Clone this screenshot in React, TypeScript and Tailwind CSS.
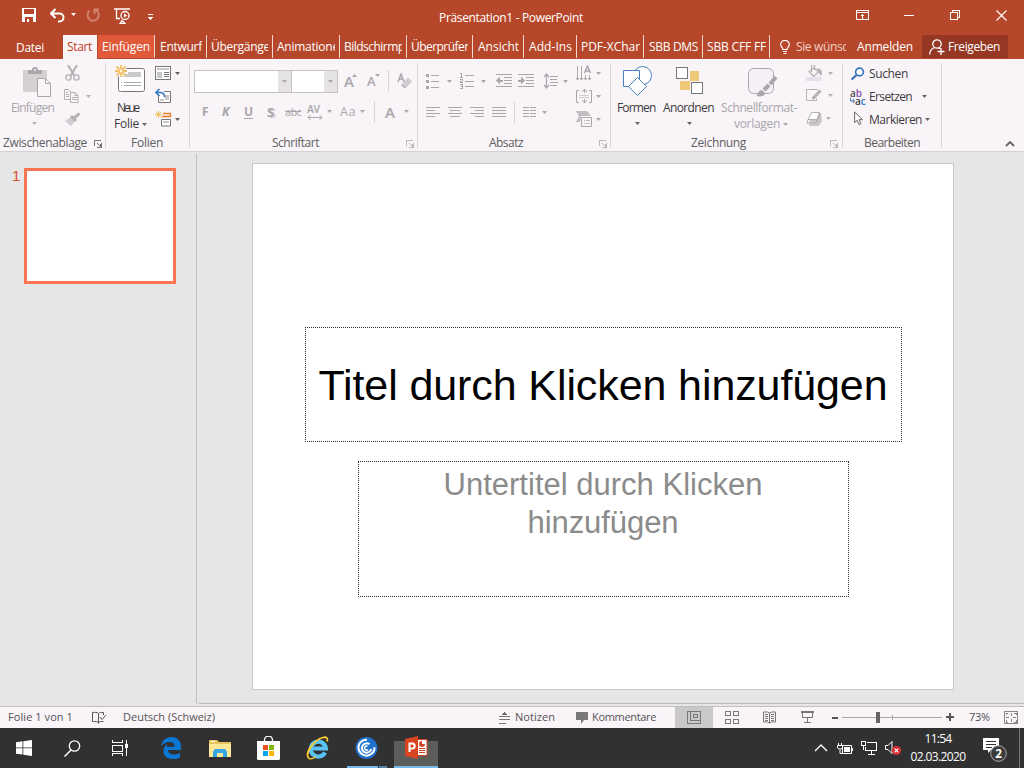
import { useLayoutEffect, useRef, useState } from "react";
import type { ReactNode } from "react";

/* Text whose letter spacing is tuned so the label takes exactly `w` pixels. */
function Txt({ w, c = "", children }: { w: number; c?: string; children: string }) {
  const ref = useRef<HTMLSpanElement>(null);
  const [ls, setLs] = useState(0);
  useLayoutEffect(() => {
    const el = ref.current;
    if (!el) return;
    el.style.letterSpacing = "0px";
    const natural = el.getBoundingClientRect().width;
    const v = (w - natural) / children.length;
    el.style.letterSpacing = v + "px";
    setLs(v);
  }, [w, children]);
  return (
    <span ref={ref} className={"inline-block shrink-0 whitespace-nowrap " + c} style={{ letterSpacing: ls }}>
      {children}
    </span>
  );
}

function Ico({ w, h, c = "", crisp = false, children }: { w: number; h: number; c?: string; crisp?: boolean; children: ReactNode }) {
  return (
    <svg
      width={w}
      height={h}
      viewBox={`0 0 ${w} ${h}`}
      className={"block shrink-0 " + c}
      fill="none"
      stroke="currentColor"
      shapeRendering={crisp ? "crispEdges" : "auto"}
    >
      {children}
    </svg>
  );
}

function Caret({ c = "" }: { c?: string }) {
  return (
    <svg width="5" height="3" viewBox="0 0 5 3" className={"block shrink-0 " + c}>
      <path d="M0 0h5L2.5 3z" fill="currentColor" />
    </svg>
  );
}

function Launcher({ c = "" }: { c?: string }) {
  return (
    <Ico w={8} h={8} c={c} crisp>
      <path d="M.5 6V.5H7M3 3l3 3M7.500 3v4.500H3M6.500 4v3" />
    </Ico>
  );
}

function Tab({ c, w, children }: { c: string; w: number; children: string }) {
  return (
    <div className={"flex h-[23px] shrink-0 items-center overflow-hidden border-r border-[#f0d6ce] " + c}>
      <div className="flex overflow-hidden">
        <Txt w={w}>{children}</Txt>
      </div>
    </div>
  );
}

function TitleBar() {
  return (
    <div className="flex h-[35px] items-center text-white">
      <Ico w={14} h={14} c="ml-[22px] mb-[5px]" crisp>
        <path d="M0 0h14v14H0z" fill="#fff" stroke="none" />
        <path d="M2 1h10v5H2zM3 9h8v5H3z" fill="#b7472a" stroke="none" />
        <path d="M5 11h2v3H5z" fill="#fff" stroke="none" />
      </Ico>
      <Ico w={15} h={15} c="ml-[14px] mb-[5px]">
        <path d="M1 5.500h8.500a4 4 0 0 1 0 8H8M5.500 1 1 5.500 5.500 10" strokeWidth="2" />
      </Ico>
      <Caret c="ml-[6px] mb-[6px]" />
      <Ico w={14} h={14} c="ml-[10px] mb-[5px] text-[#d0836e]">
        <path d="M9.500 2A5.600 5.600 0 1 1 3.500 2.800M8.500 6V1.500H13" strokeWidth="1.900" />
      </Ico>
      <Ico w={18} h={16} c="ml-[14px] mb-[4px]">
        <path d="M0 1h16M2.500 1v9.500H6M6 15.500l2-3 3 3z" strokeWidth="1.300" />
        <circle cx="11" cy="7.500" r="4" strokeWidth="1.300" fill="#b7472a" />
        <path d="m10 5.500 3.200 2-3.200 2z" fill="#fff" stroke="none" />
      </Ico>
      <Ico w={5} h={6} c="ml-[16px] mt-[-1px]" crisp>
        <path d="M0 .5h5" />
        <path d="M0 3h5L2.500 6z" fill="#fff" stroke="none" />
      </Ico>
      <Txt w={144} c="ml-[286px]">Präsentation1 - PowerPoint</Txt>
      <Ico w={13} h={10} c="ml-[273px] mb-[5px]" crisp>
        <path d="M.5 .5h12v9H.5zM.5 2.500h12M6.500 4v5M4.500 6.500l2-2 2 2" />
      </Ico>
      <Ico w={10} h={1} c="ml-[35px] mb-[5px]" crisp>
        <path d="M0 .5h10" />
      </Ico>
      <Ico w={10} h={10} c="ml-[36px] mb-[5px]" crisp>
        <path d="M.5 2.500h7v7h-7zM2.500 2.500v-2h7v7h-2" />
      </Ico>
      <Ico w={11} h={11} c="ml-[36px] mb-[5px]">
        <path d="m.5.5 10 10m0-10-10 10" strokeWidth="1.100" />
      </Ico>
    </div>
  );
}

function Tabs() {
  return (
    <div className="flex h-[24px] text-white">
      <div className="flex h-[24px] w-[63px] shrink-0 items-center pl-[16px] pt-[2px]"><Txt w={28}>Datei</Txt></div>
      <div className="flex h-[24px] w-[34px] shrink-0 items-center bg-[#f8f4f8] pl-[4px] text-[#c43e1c]"><Txt w={25}>Start</Txt></div>
      <div className="h-[24px] w-px shrink-0 bg-[#b7472a]" />
      <Tab c="w-[57px] bg-[#e05a3a] pl-[4px]" w={48}>Einfügen</Tab>
      <Tab c="w-[52px] pl-[5px]" w={42}>Entwurf</Tab>
      <Tab c="w-[66px] pl-[4px] pr-[4px]" w={59}>Übergänge</Tab>
      <Tab c="w-[67px] pl-[4px] pr-[4px]" w={69}>Animationen</Tab>
      <Tab c="w-[67px] pl-[4px] pr-[4px]" w={119}>Bildschirmpräsentation</Tab>
      <Tab c="w-[66px] pl-[4px] pr-[4px]" w={60}>Überprüfen</Tab>
      <Tab c="w-[51px] pl-[5px]" w={41}>Ansicht</Tab>
      <Tab c="w-[53px] pl-[5px]" w={43}>Add-Ins</Tab>
      <Tab c="w-[67px] pl-[4px] pr-[3px]" w={59}>PDF-XChar</Tab>
      <Tab c="w-[59px] pl-[5px]" w={49}>SBB DMS</Tab>
      <Tab c="w-[67px] pl-[4px]" w={59}>SBB CFF FF</Tab>
      <div className="flex h-[24px] items-center">
        <Ico w={10} h={14} c="ml-[10px]">
          <path d="M3 9.500C3 7.500.7 7 .7 4.600a4.300 4.300 0 0 1 8.600 0C9.300 7 7 7.500 7 9.500zM3 11.500h4M3.500 13.500h3" strokeWidth="1.200" />
        </Ico>
        <div className="ml-[6px] w-[50px] overflow-hidden text-[#efcfc6]"><Txt w={65}>Sie wünsche</Txt></div>
        <Txt w={56} c="ml-[11px]">Anmelden</Txt>
        <div className="ml-[9px] flex h-[23px] w-[86px] items-center self-start bg-[#953722]">
          <Ico w={16} h={16} c="ml-[7px]">
            <circle cx="8" cy="5" r="4.200" strokeWidth="1.300" />
            <path d="M.7 15.500c0-4 2.300-6 5-7M12 9v7M8.500 12.500h7M9.500 8.800l1.500 1" strokeWidth="1.300" />
          </Ico>
          <Txt w={52} c="ml-[3px]">Freigeben</Txt>
        </div>
      </div>
    </div>
  );
}

function Group({ c, label, w, l, launcher, children }: { c: string; label: string; w: number; l: string; launcher?: string; children: ReactNode }) {
  return (
    <div className={"flex h-[85px] shrink-0 flex-col border-r border-[#dad6da] " + c}>
      <div className="flex h-[72px] shrink-0">{children}</div>
      <div className={"mt-[2px] flex h-[11px] shrink-0 items-center text-[#605e60] " + l}>
        <Txt w={w}>{label}</Txt>
        {launcher && <Launcher c={"mt-[2px] " + launcher} />}
      </div>
    </div>
  );
}

const G = "text-[#b4b0b4]";
const D = "text-[#605e60]";

function Clipboard() {
  return (
    <Group c="w-[106px]" label="Zwischenablage" w={84} l="pl-[3px]" launcher="ml-[7px] text-[#777]">
      <div className="flex w-[64px] shrink-0 flex-col">
        <Ico w={29} h={31} c="ml-[23px] mt-[4px]">
          <path d="M0 3h24v22H0z" fill="#d4d0d4" stroke="none" />
          <path d="M5 7V3h4a3 3 0 0 1 6 0h4v4z" fill="#aaa6aa" stroke="none" />
          <path d="M14.500 11.500h8l5 5v13h-13z" fill="#f8f4f8" stroke="#aaa6aa" />
          <path d="M22.500 11.500v5h5" stroke="#aaa6aa" />
          <circle cx="12" cy="3" r="1" fill="#f8f4f8" stroke="none" />
        </Ico>
        <Txt w={47} c="ml-[11px] mt-[2px] h-[17px] text-[#a8a4a8]">Einfügen</Txt>
        <Caret c="ml-[32px] mt-[5px] text-[#b4b0b4]" />
      </div>
      <div className={"flex flex-col " + G}>
        <Ico w={15} h={16} c="ml-px mt-[2px]">
          <path d="m3 0 6.500 11M12 0 5.500 11" strokeWidth="2" />
          <circle cx="3.500" cy="12.500" r="2.600" strokeWidth="1.300" />
          <circle cx="11.500" cy="12.500" r="2.600" strokeWidth="1.300" />
        </Ico>
        <div className="mt-[8px] flex items-center">
          <Ico w={15} h={14}>
            <path d="M6 10.500H.5V.5h4l3 3M2 3.500h2M2 5.500h3M2 7.500h3M6.500 3.500h4.500l3 3v7H6.500zM11 3.500v3h3M8 8.500h5M8 10.500h5" />
          </Ico>
          <Caret c="ml-[7px]" />
        </div>
        <Ico w={16} h={14} c="ml-px mt-[9px]">
          <path d="m0 9 6-4 4 4-4 5z" fill="#d0ccd0" stroke="none" />
          <path d="m6 4 5 5M9 6l5.500-4.500" strokeWidth="3" />
        </Ico>
      </div>
    </Group>
  );
}

function Slides() {
  return (
    <Group c="w-[84px]" label="Folien" w={32} l="pl-[25px]">
      <div className="flex w-[49px] shrink-0 flex-col">
        <Ico w={31} h={28} c="ml-[9px] mt-[2px]">
          <path d="M3.500 5.500A2 2 0 0 1 5.500 3.500h22a2 2 0 0 1 2 2v19a2 2 0 0 1-2 2h-22a2 2 0 0 1-2-2z" fill="#fff" stroke="#777577" />
          <path d="M13 7h13v5H7v-3h6z" fill="#cbc8cb" stroke="none" />
          <path d="M6 17.500h1M9 17.500h17M6 20.500h1M9 20.500h17" stroke="#aaa" />
          <circle cx="6" cy="6" r="6" fill="#f8f4f8" stroke="none" />
          <path d="M6 0v12M0 6h12M1.500 1.500l9 9M10.500 1.500l-9 9" stroke="#f0c169" strokeWidth="1.800" />
          <circle cx="6" cy="6" r="2" fill="#fff3d8" stroke="#f0c169" />
        </Ico>
        <Txt w={29} c="ml-[11px] mt-[7px] h-[15px] text-[#3e3c3e]">Neue</Txt>
        <div className="flex h-[18px] items-center text-[#3e3c3e]">
          <Txt w={25} c="ml-[8px]">Folie</Txt>
          <Caret c="ml-[3px] text-[#666]" />
        </div>
      </div>
      <div className={"flex flex-col " + D}>
        <div className="mt-[3px] flex items-center">
          <Ico w={16} h={14} crisp>
            <path d="M.5.5h15v13H.5z" fill="#fff" stroke="#777" />
            <path d="M2 2h12v2H2zM2 6h5v6H2z" fill="#cac7ca" stroke="none" />
            <path d="M9 6.500h5M9 8.500h5M9 10.500h5" stroke="#777" />
          </Ico>
          <Caret c="ml-[4px]" />
        </div>
        <Ico w={17} h={16} c="mt-[8px]">
          <path d="M3.500 7v7.500h12v-11H9" fill="#fff" stroke="#777" />
          <path d="M5 11h4v2H5zM10 7h4v5h-4z" fill="#cac7ca" stroke="none" />
          <path d="M1 4.500h4c3 0 4.500 1.500 4.500 4.500M4.500 1 1 4.500 4.500 8" stroke="#3c7abf" strokeWidth="1.700" />
        </Ico>
        <div className="mt-[7px] flex items-center">
          <Ico w={17} h={16}>
            <path d="M8 2.500h7.500v3H7" stroke="#ed7d22" strokeWidth="1.400" />
            <path d="M6.500 8.500h9v6.500h-9z" fill="#fff" stroke="#777" />
            <path d="M8 10h6v2H8z" fill="#cac7ca" stroke="none" />
            <path d="M3.500 0v7M0 3.500h7M1 1l5 5M6 1 1 6" stroke="#f0c169" />
          </Ico>
          <Caret c="ml-[3px]" />
        </div>
      </div>
    </Group>
  );
}

function FontGroup() {
  return (
    <Group c="w-[228px]" label="Schriftart" w={47} l="pl-[82px]" launcher="ml-[87px] text-[#bbb7bb]">
      <div className={"flex flex-col text-[#aaa6aa]"}>
        <div className="mt-[6px] flex h-[24px] items-center">
          <div className="ml-[4px] flex h-[23px] w-[98px] justify-end border border-[#c6c3c6] bg-white">
            <div className="flex h-full w-[13px] items-center justify-center bg-[#e6e3e6]"><Caret /></div>
          </div>
          <div className="flex h-[23px] w-[46px] justify-end border border-l-0 border-[#c6c3c6] bg-white">
            <div className="flex h-full w-[13px] items-center justify-center bg-[#e6e3e6]"><Caret /></div>
          </div>
          <span className="ml-[6px] text-[15px] font-semibold leading-none">A</span>
          <Ico w={5} h={3} c="mb-[12px] ml-[-2px]"><path d="M0 3h5L2.500 0z" fill="currentColor" stroke="none" /></Ico>
          <span className="ml-[10px] mt-px text-[13px] font-semibold leading-none">A</span>
          <Caret c="mb-[12px] ml-[-1px]" />
          <div className="ml-[8px] h-[22px] w-px bg-[#d6d2d6]" />
          <Ico w={16} h={16} c="ml-[8px]">
            <path d="m1 9 3-8 3 8M2 6h4" strokeWidth="1.500" />
            <path d="m5 11 6-6.500 4 4L9 15z" fill="#d0ccd0" stroke="none" />
            <path d="m4.500 11.500 4 3.500" strokeWidth="1.200" />
          </Ico>
        </div>
        <div className="mt-[7px] flex h-[23px] items-center">
          <Txt w={7} c="ml-[12px] font-bold">F</Txt>
          <Txt w={9} c="ml-[13px] font-bold italic">K</Txt>
          <Txt w={9} c="ml-[13px] font-bold underline underline-offset-2">U</Txt>
          <Txt w={9} c="ml-[14px] text-[13px] font-bold [text-shadow:2px_1px_1px_#d0ccd0]">S</Txt>
          <Txt w={16} c="ml-[9px] text-[11px] line-through">abc</Txt>
          <div className="ml-[6px] flex w-[16px] flex-col">
            <Txt w={15} c="h-[11px] text-[10.5px] font-semibold leading-[11px]">AV</Txt>
            <Ico w={16} h={5}><path d="M1 2.500h14M3.500 0 1 2.500 3.500 5M12.500 0 15 2.500 12.500 5" /></Ico>
          </div>
          <Caret c="ml-[4px]" />
          <Txt w={16} c="ml-[8px] text-[12.5px]">Aa</Txt>
          <Caret c="ml-[4px]" />
          <div className="ml-[9px] h-[22px] w-px bg-[#d6d2d6]" />
          <Txt w={10} c="ml-[10px] text-[15px] font-semibold">A</Txt>
          <Caret c="ml-[9px]" />
        </div>
      </div>
    </Group>
  );
}

function Lines({ c = "", d }: { c?: string; d: string }) {
  return <Ico w={14} h={11} c={c} crisp><path d={d} /></Ico>;
}

function Paragraph() {
  return (
    <Group c="w-[193px]" label="Absatz" w={34} l="pl-[71px]" launcher="ml-[76px] text-[#bbb7bb]">
      <div className="flex w-[158px] shrink-0 flex-col text-[#aaa6aa]">
        <div className="mt-[6px] flex h-[24px] items-center">
          <Ico w={14} h={15} c="ml-[8px]" crisp>
            <path d="M0 0h3v3H0zM0 6h3v3H0zM0 12h3v3H0z" fill="currentColor" stroke="none" />
            <path d="M5 1.500h8M5 7.500h8M5 13.500h8" />
          </Ico>
          <Caret c="ml-[7px]" />
          <Ico w={15} h={16} c="ml-[8px]" crisp>
            <path d="M5 2.500h9M5 8.500h9M5 13.500h9M0 .5h1.500V4M0 4.500h3M0 6.500h2.500v1L0 9.500h3M0 11.500h2.500v4H0M1 13.500h1" />
          </Ico>
          <Caret c="ml-[6px]" />
          <Ico w={16} h={14} c="ml-[10px]" crisp>
            <path d="M0 .5h16M8 3.500h8M8 6.500h8M8 9.500h8M0 12.500h16" />
            <path d="M0 6.500 4 3v2.500h3v2H4V10z" fill="currentColor" stroke="none" />
          </Ico>
          <Ico w={16} h={14} c="ml-[6px]" crisp>
            <path d="M0 .5h16M8 3.500h8M8 6.500h8M8 9.500h8M0 12.500h16" />
            <path d="M7 6.500 3 3v2.500H0v2h3V10z" fill="currentColor" stroke="none" />
          </Ico>
          <Ico w={14} h={16} c="ml-[10px]">
            <path d="M2.500 1v14M0 4l2.500-3L5 4M0 12l2.500 3L5 12" strokeWidth="1.300" />
            <path d="M6 3.500h8M6 6.500h7M6 9.500h8M6 12.500h7" />
          </Ico>
          <Caret c="ml-[5px]" />
        </div>
        <div className="mt-[8px] flex h-[23px] items-center">
          <Lines c="ml-[8px]" d="M0 .5h14M0 3.500h9M0 6.500h14M0 9.500h9" />
          <Lines c="ml-[8px]" d="M0 .5h14M2 3.500h10M0 6.500h14M2 9.500h10" />
          <Lines c="ml-[8px]" d="M0 .5h14M5 3.500h9M0 6.500h14M5 9.500h9" />
          <Lines c="ml-[8px]" d="M0 .5h14M0 3.500h14M0 6.500h14M0 9.500h14" />
          <div className="ml-[8px] h-[22px] w-px bg-[#d6d2d6]" />
          <Lines c="ml-[8px]" d="M0 .5h6M0 3.500h6M0 6.500h6M0 9.500h6M7 .5h6M7 3.500h6M7 6.500h6M7 9.500h6" />
          <Caret c="ml-[5px]" />
        </div>
      </div>
      <div className="flex flex-col text-[#aaa6aa]">
        <div className="mt-[2px] flex items-center">
          <Ico w={16} h={17}>
            <path d="M1.500 1v14M5.500 1v14M0 13l1.500 2L3 13M4 13l1.500 2L7 13M9.500 10v5M13.500 10v5M8 13l1.500 2 1.500-2M12 13l1.500 2 1.500-2" />
            <path d="m8.500 8 3-7 3 7M9.500 6h4" strokeWidth="1.500" />
          </Ico>
          <Caret c="ml-[4px]" />
        </div>
        <div className="mt-[6px] flex items-center">
          <Ico w={16} h={16}>
            <path d="M3 2.500H.5v12H3M13 2.500h2.500v12H13M8.500 1v4M8.500 11v4M6 4l2.500-3L11 4M6 12l2.500 3L11 12" />
            <path d="M3 7.500h10M3 9.500h10" stroke="#d0ccd0" />
          </Ico>
          <Caret c="ml-[4px]" />
        </div>
        <div className="mt-[7px] flex items-center">
          <Ico w={16} h={16}>
            <path d="M0 0h11l4 5H5l-1 6H0l3-6z" fill="#c0bcc0" stroke="none" />
            <path d="M5.500 6.500h10v9h-10z" fill="#f8f4f8" />
            <path d="M8 9.500h1M10 9.500h4M8 12.500h1M10 12.500h4" stroke="#c0bcc0" />
          </Ico>
          <Caret c="ml-[4px]" />
        </div>
      </div>
    </Group>
  );
}

function Drawing() {
  return (
    <Group c="w-[232px]" label="Zeichnung" w={55} l="pl-[80px]" launcher="ml-[84px] text-[#bbb7bb]">
      <div className="flex w-[52px] shrink-0 flex-col">
        <Ico w={31} h={31} c="ml-[11px] mt-[3px] text-[#4a80bd]">
          <circle cx="20.500" cy="9.500" r="9" fill="#fff" />
          <path d="M1.500 4.500h16v16h-16z" fill="#fff" />
          <path d="m15.500 11.500 9 9-9 9-9-9z" fill="#fff" />
        </Ico>
        <Txt w={41} c="ml-[6px] mt-[3px] h-[17px] text-[#3e3c3e]">Formen</Txt>
        <Caret c="ml-[24px] mt-[5px] text-[#666]" />
      </div>
      <div className="flex w-[58px] shrink-0 flex-col">
        <Ico w={28} h={28} c="ml-[13px] mt-[4px]" crisp>
          <path d="M14 4h9v10h-9zM4 14h10v9H4z" fill="#f0c978" stroke="none" />
          <path d="M.5.5h11v11H.5zM15.500 15.500h11v11h-11z" fill="#fff" stroke="#777" />
        </Ico>
        <Txt w={53} c="mt-[5px] h-[17px] text-[#3e3c3e]">Anordnen</Txt>
        <Caret c="ml-[24px] mt-[5px] text-[#666]" />
      </div>
      <div className="flex w-[85px] shrink-0 flex-col text-[#aaa6aa]">
        <Ico w={30} h={31} c="ml-[27px] mt-[4px]">
          <rect x=".5" y="1.500" width="25" height="25" rx="5" fill="#f5f0f5" />
          <path d="M8 29c3-2 2-6 6-6l3 3c0 3-3 4-9 3z" fill="#aaa6aa" stroke="none" />
          <path d="m16 23 5-5M22 17l6-7" strokeWidth="4" />
        </Ico>
        <Txt w={79} c="mt-[2px] h-[15px]">Schnellformat-</Txt>
        <div className="flex h-[18px] items-center">
          <Txt w={46} c="ml-[13px]">vorlagen</Txt>
          <Caret c="ml-[3px]" />
        </div>
      </div>
      <div className={"flex flex-col " + G}>
        <div className="mt-[2px] flex items-center">
          <Ico w={17} h={16}>
            <path d="M0 12h16v4H0z" fill="#e6e0ea" stroke="none" />
            <path d="m3 6.500 5-4 4.500 4.500-5 4.500zM5.500 7V0h3v5" fill="#f8f4f8" strokeWidth="1.200" />
            <path d="M11 3c5 1 6 4 4 8l-3-4z" fill="currentColor" stroke="none" />
          </Ico>
          <Caret c="ml-[5px]" />
        </div>
        <div className="mt-[7px] flex items-center">
          <Ico w={17} h={14}>
            <path d="M12 1.500H.5v11h10v-2" />
            <path d="m6.500 11 8-8.500" strokeWidth="3" />
          </Ico>
          <Caret c="ml-[5px]" />
        </div>
        <div className="mt-[9px] flex items-center">
          <Ico w={16} h={15}>
            <path d="M5 2h10l1 8-3 5H3z" fill="#cac6ca" stroke="none" />
            <path d="M5.500 1.500h8l-2.500 7H2z" fill="#fff" />
            <path d="M2 8.500 1 12h9l1-3.500 2.500-7v4L10 12" />
          </Ico>
          <Caret c="ml-[4px]" />
        </div>
      </div>
    </Group>
  );
}

function Editing() {
  return (
    <Group c="w-[99px]" label="Bearbeiten" w={56} l="pl-[21px]">
      <div className="flex flex-col text-[#3e3c3e]">
        <div className="flex h-[22px] items-center">
          <Ico w={14} h={13} c="ml-[8px] mt-[-1px] text-[#3e74b4]">
            <circle cx="8.500" cy="5" r="3.900" strokeWidth="1.700" fill="#fff" />
            <path d="m5.500 8-5 4.500" strokeWidth="2.300" />
          </Ico>
          <Txt w={39} c="ml-[4px]">Suchen</Txt>
        </div>
        <div className="flex h-[23px] items-center">
          <div className="ml-[7px] flex w-[16px] flex-col text-[10px] font-semibold leading-[8px]">
            <div className="flex text-[#4b494b]"><span>a</span><span className="text-[#8d4eb0]">b</span></div>
            <div className="flex items-center">
              <Ico w={5} h={5} c="text-[#3e74b4]"><path d="M.5 0v3H4M3 1l1.500 2L3 5" /></Ico>
              <span>a</span><span className="text-[#3e74b4]">c</span>
            </div>
          </div>
          <Txt w={43} c="ml-[3px]">Ersetzen</Txt>
          <Caret c="ml-[10px] text-[#666]" />
        </div>
        <div className="flex h-[23px] items-center">
          <Ico w={10} h={14} c="ml-[11px] mt-[-3px]">
            <path d="M.6 1v10.500l2.600-2.200L5 13.500l2-.8-2-4h3.500z" fill="#fff" stroke="#666" />
          </Ico>
          <Txt w={53} c="ml-[5px]">Markieren</Txt>
          <Caret c="ml-[3px] text-[#666]" />
        </div>
      </div>
    </Group>
  );
}

function Workspace() {
  return (
    <div className="flex h-[554px] bg-[#e6e6e6]">
      <div className="my-[2px] flex w-[197px] shrink-0 border-r border-[#c0c0c0]">
        <span className="ml-[12px] mt-[14px] w-[12px] font-['Liberation_Sans',sans-serif] text-[15px] leading-[16px] text-[#d95030]">1</span>
        <div className="mt-[14px] h-[116px] w-[152px] border-3 border-[#fa7554] bg-white" />
      </div>
      <div className="ml-[2px] flex h-[552px] grow flex-col border-b border-[#bcbcbc] pt-[11px]">
        <div className="ml-[53px] flex h-[527px] w-[702px] flex-col border border-[#c6c6c6] bg-white font-['Liberation_Sans',Arial,sans-serif]">
          <div className="ml-[52px] mt-[163px] flex h-[115px] w-[597px] justify-center border border-dotted border-[#333] pt-[32px] pr-px text-[43px] leading-[50px] text-black">
            <Txt w={569}>Titel durch Klicken hinzufügen</Txt>
          </div>
          <div className="ml-[105px] mt-[19px] flex h-[136px] w-[491px] flex-col items-center border border-dotted border-[#333] pt-[4px] pr-px text-[31px] leading-[38px] text-[#8b8b8b]">
            <Txt w={319}>Untertitel durch Klicken</Txt>
            <Txt w={151}>hinzufügen</Txt>
          </div>
        </div>
      </div>
    </div>
  );
}

function StatusBar() {
  return (
    <div className="flex h-[22px] items-center border-t border-[#c0bec0] bg-[#f8f4f8] text-[11px] text-[#555355]">
      <Txt w={65} c="ml-[8px] mt-[-2px]">Folie 1 von 1</Txt>
      <Ico w={15} h={13} c="ml-[19px]">
        <path d="M6.500 2.500C5 .8 3 1.500.5 1.500v9c3 0 4.500-.5 6 1.500 1-1.500 3-1.500 5-1.500M6.500 2.500V12M6.500 2.500C8 1 9 1.500 11.500 1.500V4M8 6l2 2.500L14 4" />
      </Ico>
      <Txt w={92} c="ml-[16px] mt-[-1px]">Deutsch (Schweiz)</Txt>
      <Ico w={12} h={12} c="ml-[284px]" crisp>
        <path d="M0 4.500h11M0 7.500h11M0 11.500h7" stroke="#777" />
        <path d="M3 3h5L5.500 0z" fill="#666" stroke="none" />
      </Ico>
      <Txt w={40} c="ml-[4px] mt-[-1px]">Notizen</Txt>
      <Ico w={12} h={12} c="ml-[21px]">
        <path d="M0 0h12v8H8l-3 4V8H0z" fill="#7a787a" stroke="none" />
      </Ico>
      <Txt w={64} c="ml-[4px] mt-[-1px]">Kommentare</Txt>
      <div className="ml-[19px] flex h-[21px] w-[38px] items-center justify-center bg-[#cbc8cb]">
        <Ico w={14} h={13} crisp>
          <path d="M.5.5h13v12H.5zM3.500.5v9M3.500 9.500h10M6.500 3.500h4v3h-4z" stroke="#777" />
        </Ico>
      </div>
      <Ico w={15} h={13} c="ml-[12px]" crisp>
        <path d="M.5.5h5v4h-5zM8.500.5h5v4h-5zM.5 8.500h5v4h-5zM8.500 8.500h5v4h-5z" stroke="#777" />
      </Ico>
      <Ico w={13} h={13} c="ml-[23px]">
        <path d="M.5 1h4l2 1 2-1h4v10h-4l-2 1-2-1h-4zM6.500 2v10M2 3.500h3M2 5.500h3M2 7.500h3M2 9.500h3M8 3.500h3M8 5.500h3M8 7.500h3M8 9.500h3" stroke="#777" />
      </Ico>
      <Ico w={14} h={13} c="ml-[25px]" crisp>
        <path d="M0 1.500h13M1.500 1.500v5h10v-5M6.500 6.500v5M3 11.500h7M0 .5h13" stroke="#777" />
      </Ico>
      <Ico w={122} h={13} c="ml-[17px]" crisp>
        <path d="M0 6.500h6" strokeWidth="2" />
        <path d="M10 6h100M60.500 3.500v5" stroke="#aaa8aa" />
        <path d="M44 1h4v11h-4z" fill="#666466" stroke="none" />
        <path d="M114 6h8M118 2v8" strokeWidth="2" />
      </Ico>
      <Txt w={21} c="ml-[15px] mt-[-1px]">73%</Txt>
      <Ico w={14} h={13} c="ml-[14px]" crisp>
        <path d="M.5.5h13v12H.5z" stroke="#888" />
        <path d="M7 2v3M7 8v3M2 6.500h3M9 6.500h3M2 4V2h2M10 2h2v2M2 9v2h2M12 9v2h-2" stroke="#888" />
      </Ico>
    </div>
  );
}

function Taskbar() {
  return (
    <div className="flex h-[40px] items-center bg-[#303130] text-white">
      <Ico w={16} h={16} c="ml-[16px]">
        <path d="m0 2.200 6.500-.9v6.200H0zM7.300 1.200 16 0v7.500H7.300zM0 8.300h6.500v6.300L0 13.700zM7.300 8.300H16V16l-8.700-1.300z" fill="#fff" stroke="none" />
      </Ico>
      <Ico w={17} h={17} c="ml-[32px]">
        <circle cx="10.500" cy="6" r="5.200" strokeWidth="1.300" />
        <path d="m7 10-6.500 6.500" strokeWidth="1.500" />
      </Ico>
      <Ico w={17} h={16} c="ml-[31px]" crisp>
        <path d="M.5 0v2.500h10V0M.5 5.500h10v6H.5zM.5 16v-2.500h10V16M14.500 0v16" />
        <path d="M13 4h3v4h-3z" fill="#fff" stroke="none" />
      </Ico>
      <Ico w={21} h={22} c="ml-[32px]">
        <path d="M0 9.500C1 3.500 5 0 10.500 0 17 0 20 4.500 20 10v3H7c.2 3 3 4.500 6 4.500 2.500 0 4.500-.7 6-1.500v4.500c-2 1-4 1.500-7 1.500-6 0-9.500-3.500-9.500-8 0-3.500 2-6 4.500-7.500-1 1-1.400 2-1.500 3.200h8C13.500 6.500 12 5 9 5 5 5 2 6.500 0 9.500z" fill="#0a78d7" stroke="none" />
      </Ico>
      <Ico w={22} h={19} c="ml-[27px]">
        <path d="M0 1h8l2 2h12v15H0z" fill="#e9c35c" stroke="none" />
        <path d="M1 5h21v13H0V5z" fill="#ffe796" stroke="none" />
        <path d="M4 18v-5.500L6 10h10l2 2.500V18h-4v-4H8v4z" fill="#35a7e5" stroke="none" />
        <path d="M2 2.500h4" stroke="#fff" />
      </Ico>
      <Ico w={23} h={24} c="ml-[26px] mb-[1px]">
        <path d="M7.500 6V4a4 4 0 0 1 8 0v2" strokeWidth="1.300" />
        <path d="M0 5h23v17.500q0 1.500-1.500 1.500h-20Q0 24 0 22.500z" fill="#fff" stroke="none" />
        <path d="M6 9h5v5H6z" fill="#f25022" stroke="none" />
        <path d="M12 9h5v5h-5z" fill="#7fba00" stroke="none" />
        <path d="M6 15h5v5H6z" fill="#00a4ef" stroke="none" />
        <path d="M12 15h5v5h-5z" fill="#ffb900" stroke="none" />
      </Ico>
      <Ico w={24} h={24} c="ml-[26px]">
        <path d="M19 16.500a7.500 7.500 0 1 1 .8-4H7" stroke="#59c4f5" strokeWidth="4.200" />
        <path d="M3 22.500C-2 17 8 4 17 1.500c4-1 5 1 4 4" stroke="#fbc92d" strokeWidth="1.800" />
        <path d="M3 22.500c2 1 5-.5 7-2" stroke="#fbc92d" strokeWidth="1.500" />
      </Ico>
      <div className="ml-[17px] flex h-[40px] w-[40px] flex-col">
        <Ico w={23} h={23} c="ml-[8px] mt-[9px]">
          <circle cx="11.500" cy="11" r="11" fill="#1f71cc" stroke="none" />
          <path d="M5.500 5.300a8 8 0 1 0 14 5" strokeWidth="2" />
          <path d="M14.500 7.300a4.700 4.700 0 1 0 1.700 4.700M12 2.800a8 8 0 0 0-6.500 2.500" strokeWidth="2" />
          <path d="M12.500 9.300a2 2 0 1 0 .5 3.200" strokeWidth="1.600" />
        </Ico>
        <div className="mt-[6px] flex h-[2px]">
          <div className="w-[31px] bg-[#76b9ed]" />
          <div className="ml-px w-[8px] bg-[#5685a9]" />
        </div>
      </div>
      <div className="ml-[7px] mt-[13px] flex h-[27px] w-[44px] flex-col border-b-2 border-[#76b9ed] bg-[#5b5d5b]">
        <Ico w={23} h={24} c="ml-[11px] mt-[-5px]">
          <path d="M11 3.500h11v16H11z" fill="#fff" stroke="#d04423" />
          <path d="M14 12.500h6M14 14.500h6M14 16.500h6" stroke="#d04423" strokeWidth="1" />
          <path d="M17 5v3h3a3 3 0 1 1-3-3z" fill="#d04423" stroke="none" />
          <path d="M0 3 13 0v23L0 20z" fill="#d94420" stroke="none" />
          <path d="M4.500 16V7.500h2.700a2.500 2.500 0 0 1 0 5H5" strokeWidth="2" />
        </Ico>
      </div>
      <Ico w={14} h={8} c="ml-[376px]"><path d="m1 7 6-6 6 6" strokeWidth="1.400" /></Ico>
      <Ico w={16} h={13} c="ml-[9px]">
        <path d="M5.500 3.500h9v8h-9z" />
        <path d="M7 5h6v5H7z" fill="#fff" stroke="none" />
        <path d="M15.500 6v3M1.500 1v2M4.500 1v2M.5 3.500h5V6l-1.500 1H2L.5 6zM3 7.500v4h3" />
      </Ico>
      <Ico w={17} h={14} c="ml-[8px]" crisp>
        <path d="M6 1.500h9.500v8h-11V6M10.500 9.500v4M7 13.500h7M.5.5h4v4h-4zM2.500 5v4" />
      </Ico>
      <Ico w={17} h={15} c="ml-[7px]">
        <path d="M.5 4.500H3l4-4v12l-4-4H.5z" />
        <circle cx="11.500" cy="9.500" r="4.500" fill="#e02b32" stroke="none" />
        <path d="m9.700 7.700 3.600 3.600m0-3.600-3.600 3.600" strokeWidth="1.200" />
      </Ico>
      <div className="ml-[8px] flex h-[40px] w-[56px] flex-col items-center text-[12px] leading-[18px]">
        <Txt w={27} c="mt-[2px]">11:54</Txt>
        <Txt w={55}>02.03.2020</Txt>
      </div>
      <Ico w={25} h={24} c="ml-[17px] mt-[4px]">
        <path d="M0 0h16v12H8l-3 3v-3H0z" fill="#fff" stroke="none" />
        <path d="M3 3.500h10M3 6.500h10M3 9.500h6" stroke="#303130" />
        <circle cx="15.500" cy="15.500" r="7.800" fill="#3b3c3b" stroke="#aaa" />
        <text x="15.500" y="19.500" fill="#fff" stroke="none" fontSize="11.500" fontWeight="700" textAnchor="middle">2</text>
      </Ico>
      <div className="ml-[11px] h-full w-px bg-[#777]" />
    </div>
  );
}

export default function App() {
  return (
    <div className="flex h-[768px] w-[1024px] flex-col overflow-hidden bg-[#b7472a] font-['Open_Sans','Noto_Sans',sans-serif] text-[12px] leading-[16px] [font-stretch:90%]">
      <TitleBar />
      <Tabs />
      <div className="flex h-[93px] border-b border-[#d2d0d2] bg-[#f8f4f8] pt-[4px]">
        <Clipboard />
        <Slides />
        <FontGroup />
        <Paragraph />
        <Drawing />
        <Editing />
        <Ico w={10} h={6} c="ml-[63px] mt-[78px] text-[#666]"><path d="m1 5 4-4 4 4" strokeWidth="1.800" /></Ico>
      </div>
      <Workspace />
      <StatusBar />
      <Taskbar />
    </div>
  );
}
